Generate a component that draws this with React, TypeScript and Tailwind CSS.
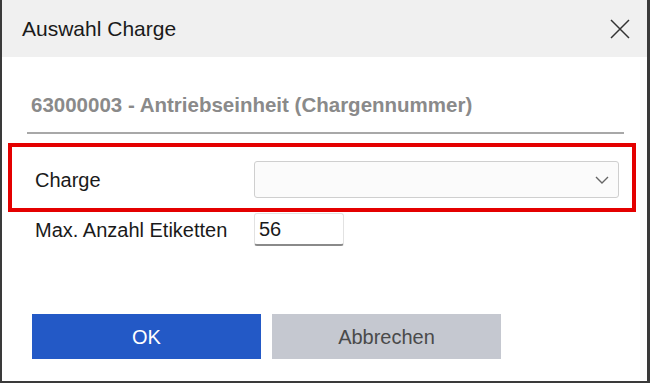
const FONT = "font-['Liberation_Sans',Arial,sans-serif]";

function CloseIcon() {
  return (
    <svg width="20" height="20" viewBox="0 0 20 20" className="text-[#333]">
      <path d="M1 1 L19 19 M19 1 L1 19" stroke="currentColor" strokeWidth="1.5" fill="none" />
    </svg>
  );
}

function Chevron() {
  return (
    <svg width="14" height="8" viewBox="0 0 14 8" className="text-[#666]">
      <path d="M1 1 L7 7 L13 1" stroke="currentColor" strokeWidth="1.4" fill="none" />
    </svg>
  );
}

export default function App() {
  return (
    <div
      className={`${FONT} flex h-[383px] w-[650px] flex-col overflow-hidden border-b-2 border-l-2 border-r-[3px] border-[#3a3a3a] bg-white`}
    >
      <div className="flex h-[57px] shrink-0 items-center justify-between bg-[#f0f0f0] pl-[20px] pr-[17px]">
        <span className="text-[21px] leading-none text-[#1a1a1a]">Auswahl Charge</span>
        <CloseIcon />
      </div>

      <div className="mt-[36px] h-[24px] pl-[29px] text-[20.5px] font-bold leading-[24px] text-[#8a8a8a]">
        63000003 - Antriebseinheit (Chargennummer)
      </div>

      <div className="ml-[25px] mt-[15px] h-[2px] w-[597px] bg-[#a8a8a8]" />

      <div className="ml-[6px] mt-[9px] flex h-[69px] w-[628px] items-start border-4 border-[#e40000] pl-[23px] pt-[14px]">
        <label className="flex h-[37px] w-[219px] items-center text-[20px] text-[#1a1a1a]">Charge</label>
        <div className="flex h-[37px] w-[365px] items-center justify-end rounded-[3px] border border-[#cfcfcf] bg-[#fbfbfb] pr-[9px]">
          <Chevron />
        </div>
      </div>

      <div className="ml-[33px] mt-px flex items-center">
        <label className="w-[219px] text-[20px] text-[#1a1a1a]">Max. Anzahl Etiketten</label>
        <div className="flex h-[33px] w-[90px] items-center rounded-[3px] border border-[#e2e2e2] border-b-2 border-b-[#8a8a8a] bg-white pl-[4px] text-[20px] text-[#1a1a1a]">
          56
        </div>
      </div>

      <div className="ml-[30px] mt-[68px] flex gap-[11px]">
        <button
          type="button"
          className="flex h-[45px] w-[229px] items-center justify-center bg-[#2359c6] text-[20px] text-white"
        >
          OK
        </button>
        <button
          type="button"
          className="flex h-[45px] w-[229px] items-center justify-center bg-[#c5c8d0] text-[20px] text-[#4a4a4a]"
        >
          Abbrechen
        </button>
      </div>
    </div>
  );
}
